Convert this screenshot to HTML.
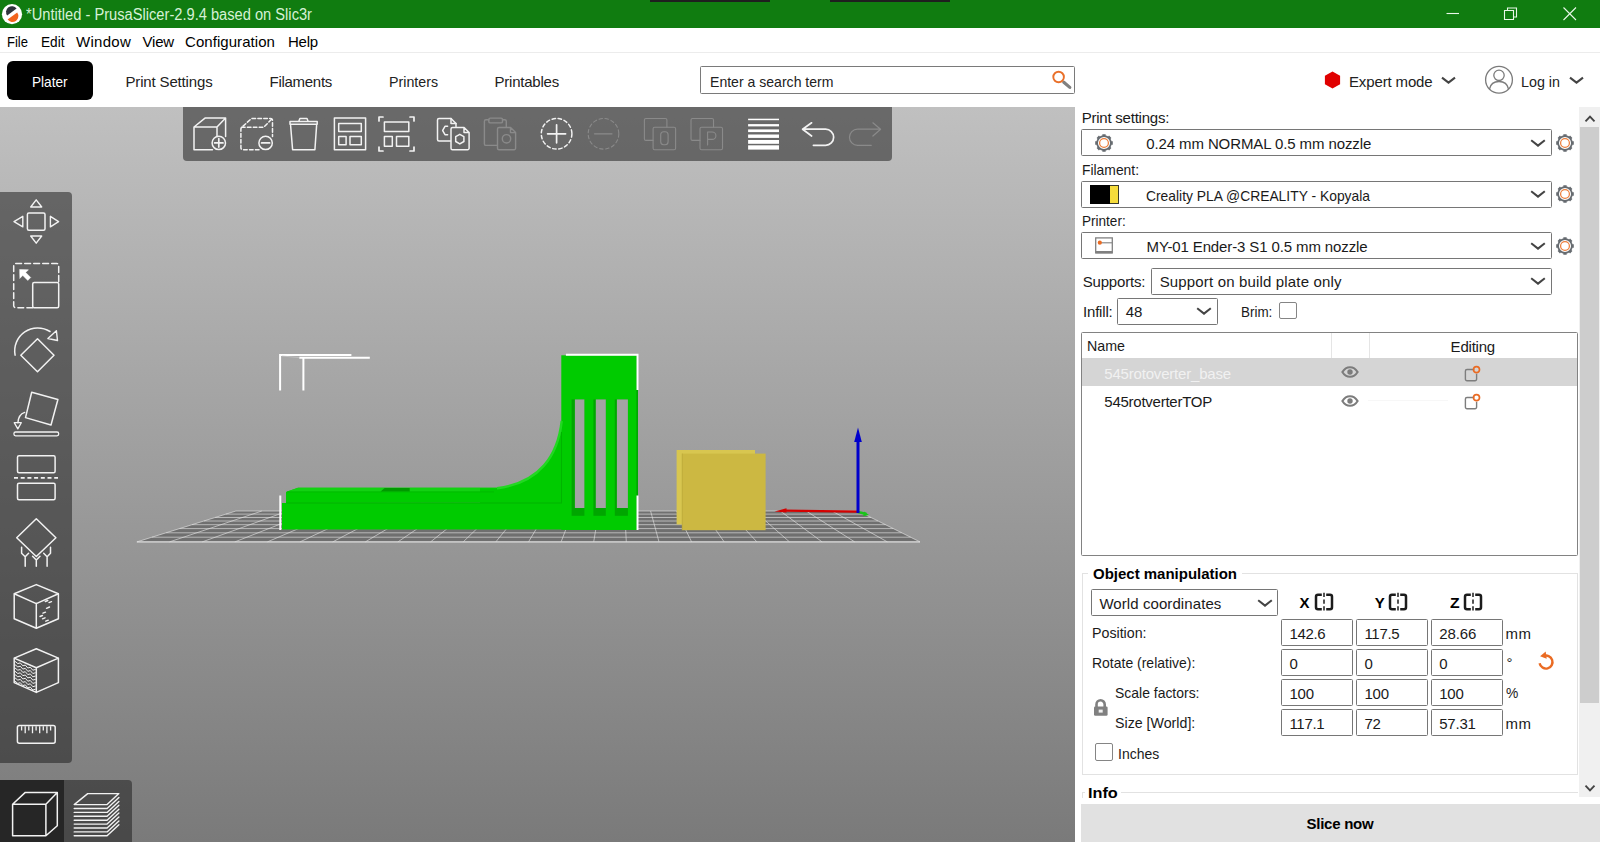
<!DOCTYPE html>
<html lang="en">
<head>
<meta charset="utf-8">
<title>*Untitled - PrusaSlicer-2.9.4 based on Slic3r</title>
<style>
html,body{margin:0;padding:0;}
body{width:1600px;height:842px;overflow:hidden;background:#fff;position:relative;
 font-family:"Liberation Sans",sans-serif;font-size:15px;color:#000;}
.t{position:absolute;white-space:pre;}
.a{position:absolute;}
.box{position:absolute;box-sizing:border-box;border:1px solid #767676;background:#fff;border-radius:1.5px;}
svg{position:absolute;overflow:visible;}
#titlebar{left:0;top:0;width:1600px;height:28px;background:#107c10;}
#canvas{left:0;top:107px;width:1075px;height:735px;background:linear-gradient(#c0c0c0,#7a7a7a);overflow:hidden;}
#toptb{left:182.500px;top:0;width:709.500px;height:53.800px;background:rgba(31,31,31,.54);border-radius:0 0 4px 4px;}
#lefttb{left:0;top:85.300px;width:72.300px;height:571px;background:rgba(31,31,31,.54);border-radius:0 4px 4px 0;}
#viewtb{left:0;top:672.800px;width:131.500px;height:63px;background:rgba(31,31,31,.54);border-radius:0 4px 0 0;}
#viewsel{left:0;top:672.800px;width:63.800px;height:63px;background:#262626;}
.ic{fill:none;stroke:#f2f2f2;stroke-width:1.5;stroke-linejoin:round;stroke-linecap:round;}
.icd{fill:none;stroke:#8a8a8a;stroke-width:1.4;stroke-linejoin:round;stroke-linecap:round;}
</style>
</head>
<body>
<!-- ===== title bar ===== -->
<div class="a" id="titlebar"></div>
<div class="a" style="left:650px;top:0;width:120px;height:2px;background:#1f1f1f"></div>
<div class="a" style="left:830px;top:0;width:120px;height:2px;background:#1f1f1f"></div>
<svg style="left:0;top:0" width="28" height="28" viewBox="0 0 28 28">
 <circle cx="12" cy="14.2" r="10.1" fill="#fff"/>
 <path d="M7.2 15.5 A5.6 5.6 0 0 1 16.6 8.6 Z" fill="#2f343d"/>
 <path d="M17.2 12.6 A5.6 5.6 0 0 1 7.6 19.6 Z" fill="#f2641d"/>
</svg>
<span class="t" style="left:25.5px;top:3.86px;font-size:16px;line-height:22px;transform:scaleX(0.9162);transform-origin:0 0;color:#d6f1d6;">*Untitled - PrusaSlicer-2.9.4 based on Slic3r</span>
<svg style="left:1440px;top:0" width="160" height="28" viewBox="1440 0 160 28" fill="none" stroke="#e9f7e9" stroke-width="1.1">
 <path d="M1446.5 13.5H1459"/>
 <path d="M1504.500 10.500h9v9h-9z M1507.500 10.500v-2.500h9v9h-3"/>
 <path d="M1563.5 7.5l12.5 12.5M1576 7.5l-12.5 12.5"/>
</svg>
<!-- ===== menu bar ===== -->
<div class="a" style="left:0;top:52px;width:1600px;height:1px;background:#ececec"></div>
<span class="t" style="left:6.5px;top:30.50px;font-size:15px;line-height:21px;transform:scaleX(0.8688);transform-origin:0 0;">File</span>
<span class="t" style="left:40.5px;top:30.50px;font-size:15px;line-height:21px;transform:scaleX(0.9088);transform-origin:0 0;">Edit</span>
<span class="t" style="left:76px;top:30.50px;font-size:15px;line-height:21px;letter-spacing:0.273px;">Window</span>
<span class="t" style="left:142.5px;top:30.50px;font-size:15px;line-height:21px;letter-spacing:-0.188px;">View</span>
<span class="t" style="left:185px;top:30.50px;font-size:15px;line-height:21px;letter-spacing:0.059px;">Configuration</span>
<span class="t" style="left:288px;top:30.50px;font-size:15px;line-height:21px;letter-spacing:-0.215px;">Help</span>
<!-- ===== tab bar ===== -->
<div class="a" style="left:7px;top:61px;width:86px;height:39px;background:#000;border-radius:6px"></div>
<span class="t" style="left:32.3px;top:71.00px;font-size:15px;line-height:21px;transform:scaleX(0.9085);transform-origin:0 0;color:#fff;">Plater</span>
<span class="t" style="left:125.5px;top:71.00px;font-size:15px;line-height:21px;letter-spacing:-0.158px;color:#222;">Print Settings</span>
<span class="t" style="left:269.5px;top:71.00px;font-size:15px;line-height:21px;letter-spacing:-0.281px;color:#222;">Filaments</span>
<span class="t" style="left:389px;top:71.00px;font-size:15px;line-height:21px;transform:scaleX(0.9480);transform-origin:0 0;color:#222;">Printers</span>
<span class="t" style="left:494.5px;top:71.00px;font-size:15px;line-height:21px;letter-spacing:-0.220px;color:#222;">Printables</span>
<div class="box" style="left:700px;top:66px;width:375px;height:28px;border-color:#7a7a7a"></div>
<span class="t" style="left:709.5px;top:71.10px;font-size:15px;line-height:21px;transform:scaleX(0.9376);transform-origin:0 0;color:#222;">Enter a search term</span>
<svg style="left:1048px;top:66px" width="28" height="28" viewBox="1048 66 28 28" fill="none">
 <path d="M1063.800 82.200l6 5.200" stroke="#808080" stroke-width="3.200" stroke-linecap="round"/>
 <circle cx="1058.6" cy="77" r="5.300" stroke="#e9702a" stroke-width="1.900"/>
</svg>
<svg style="left:1320px;top:66px" width="280" height="30" viewBox="1320 66 280 30" fill="none">
 <path d="M1332.5 71.5l7.6 4.3v8.5l-7.6 4.3l-7.6-4.3v-8.5z" fill="#e00000"/>
 <path d="M1442 77.7l6.5 5l6.5-5" stroke="#444" stroke-width="2.1"/>
 <path d="M1570 77.7l6.5 5l6.5-5" stroke="#444" stroke-width="2.1"/>
 <circle cx="1499" cy="79.8" r="13.4" stroke="#7b7b7b" stroke-width="1.3"/>
 <circle cx="1499" cy="75.3" r="5.2" stroke="#7b7b7b" stroke-width="1.3"/>
 <path d="M1489.5 89c1-5 4.5-7.5 9.5-7.5s8.500 2.500 9.500 7.500" stroke="#7b7b7b" stroke-width="1.3"/>
</svg>
<span class="t" style="left:1349px;top:70.50px;font-size:15px;line-height:21px;letter-spacing:-0.141px;color:#222;">Expert mode</span>
<span class="t" style="left:1521px;top:70.50px;font-size:15px;line-height:21px;transform:scaleX(0.9541);transform-origin:0 0;color:#222;">Log in</span>
<!-- ===== 3D canvas ===== -->
<div class="a" id="canvas">
<svg style="left:0;top:0" width="1075" height="735" viewBox="0 107 1075 735">
<polygon points="136.9,541.9 920.0,541.9 858.0,511.0 235.9,511.0" fill="#666" fill-opacity=".82"/>
<path d="M136.9 541.9L235.9 511.0M169.5 541.9L261.8 511.0M202.2 541.9L287.8 511.0M234.8 541.9L313.7 511.0M267.4 541.9L339.6 511.0M300.0 541.9L365.5 511.0M332.7 541.9L391.4 511.0M365.3 541.9L417.4 511.0M397.9 541.9L443.3 511.0M430.6 541.9L469.2 511.0M463.2 541.9L495.1 511.0M495.8 541.9L521.0 511.0M528.5 541.9L547.0 511.0M561.1 541.9L572.9 511.0M593.7 541.9L598.8 511.0M626.3 541.9L624.7 511.0M659.0 541.9L650.6 511.0M691.6 541.9L676.6 511.0M724.2 541.9L702.5 511.0M756.9 541.9L728.4 511.0M789.5 541.9L754.3 511.0M822.1 541.9L780.3 511.0M854.7 541.9L806.2 511.0M887.4 541.9L832.1 511.0M920.0 541.9L858.0 511.0M136.9 541.9L920.0 541.9M152.0 537.2L910.6 537.2M166.2 532.8L901.7 532.8M179.5 528.6L893.3 528.6M192.1 524.7L885.5 524.7M204.0 521.0L878.0 521.0M215.2 517.5L871.0 517.5M225.8 514.1L864.3 514.1M235.9 511.0L858.0 511.0" stroke="#e4e4e4" stroke-opacity=".7" stroke-width=".9" fill="none"/>
<path d="M136.9 541.9L920.0 541.9" stroke="#dcdcdc" stroke-width="1"/>
<path d="M858 512L866.5 514" stroke="#19c419" stroke-width="2.6"/><path d="M864 511.6l5 3.400l-5.800 1.200z" fill="#19c419"/>
<path d="M858 511.600L784 510.600" stroke="#d40000" stroke-width="2.200"/><path d="M774.500 511.400l12-3.200v4.400z" fill="#d40000"/>
<path d="M858 513V440" stroke="#0000cc" stroke-width="3"/><path d="M858 427.500l3.800 14.500h-7.600z" fill="#0000cc"/>
<rect x="676.600" y="450" width="78.400" height="74.500" fill="#d8c650"/>
<rect x="681.800" y="453.600" width="1.200" height="76.600" fill="#bba83a"/>
<rect x="682.600" y="453.600" width="83" height="76.600" fill="#ccb842"/>
<rect x="561.300" y="355.300" width="76.600" height="174.700" fill="#00cb00"/>
<rect x="282" y="503" width="355" height="26.500" fill="#00cb00"/>
<path d="M286 503v-10.400q0-1 1-1l11-3.800H500v15z" fill="#00cb00"/>
<path d="M287 491.700l11-3.900H497l-4 3.900z" fill="#12d212"/>
<path d="M561.700 421C558 455 540 483 497 488.200H480V503H562z" fill="#00cb00"/>
<path d="M561.700 421C558 455 540 483 497 488.200" fill="none" stroke="#22d822" stroke-width="2.400"/>
<path d="M287 491.900H494" stroke="#00b800" stroke-width=".8"/>
<path d="M286.300 503H561.500V432" fill="none" stroke="#00b400" stroke-width="1.100"/>
<path d="M380.600 491.500l4-3.400h25.100v3.400z" fill="#009a00"/>
<rect x="571.6" y="399.400" width="12.8" height="116.400" fill="#00a600"/>
<rect x="574.9" y="399.400" width="9.5" height="108.600" fill="#a3a3a3"/>
<rect x="593.4" y="399.400" width="12.4" height="116.400" fill="#00a600"/>
<rect x="595.8" y="399.400" width="10.0" height="108.600" fill="#a3a3a3"/>
<rect x="614.8" y="399.400" width="13.1" height="116.400" fill="#00a600"/>
<rect x="616.9" y="399.400" width="11.0" height="108.600" fill="#a3a3a3"/>
<rect x="636.300" y="355.300" width="1.700" height="174.700" fill="#00a800"/>
<path d="M280.100 390.400V354.900H351.400" stroke="#fff" fill="none" stroke-width="2"/>
<path d="M303.400 390.400V357.800M299.300 357.800H369.800" stroke="#fff" fill="none" stroke-width="2"/>
<path d="M282 356L299 357.600" stroke="#c8c8c8" stroke-width=".7" fill="none"/>
<path d="M565.900 354.800H637.500V390" stroke="#fff" fill="none" stroke-width="2"/>
<path d="M637.500 495.500V530" stroke="#fff" fill="none" stroke-width="2"/>
<path d="M280.300 495.500V530" stroke="#fff" fill="none" stroke-width="2"/>
</svg>
<div class="a" id="toptb"></div>
<div class="a" id="lefttb"></div>
<div class="a" id="viewtb"></div>
<div class="a" id="viewsel"></div>
<!-- top toolbar icons (page coordinates via viewBox) -->
<svg style="left:0;top:0" width="1075" height="735" viewBox="0 107 1075 735">
<g class="ic">
 <!-- add -->
 <path d="M217 136.500v-9.500h-23v22.700h18.500M194 127l11-8.900h20.600l-8.600 8.900M225.600 118.100v18.500"/>
 <circle cx="218.800" cy="142.900" r="6.700"/>
 <path d="M214.600 142.900h8.400M218.800 138.700v8.400" stroke-width="1.700"/>
 <!-- delete -->
 <g stroke-dasharray="3.600 2.300">
 <path d="M259 149.700h-16.100a2 2 0 0 1-2-2v-18.700a2 2 0 0 1 .700-1.500l9.400-8.600a2 2 0 0 1 1.300-.500h18.200a2 2 0 0 1 2 2v16"/>
 <path d="M241.500 127.200h22.300l8-8.200"/>
 </g>
 <circle cx="265.600" cy="142.900" r="6.700"/>
 <path d="M261.600 142.900h8" stroke-width="1.800"/>
 <!-- trash -->
 <path d="M290.600 125.400l2 24.300h22.300l1.700-24.300"/>
 <path d="M290 121.600h27.200v2.600h-27.200zM298.700 121.600l1.200-3.100h7.100l1.200 3.100" />
 <!-- arrange -->
 <path d="M334.400 118.100h31.200v31.600h-31.200zM338.700 123.500h22.600v8.100h-22.600zM338.700 136.400h7.400v8.400h-7.400zM350 136.400h11.300v8.400h-11.300z"/>
 <!-- arrange selection -->
 <path d="M379 121v-4h4M410 117h4v4M414 147v4h-4M383 151h-4v-4" stroke-width="1.700"/>
 <path d="M384.400 122h24.400v9.600h-24.400zM384.400 136.600h7.900v9.700h-7.900zM396.500 136.600h12.300v9.700h-12.300z"/>
 <!-- copy -->
 <path d="M450.500 141h-11.500a1.500 1.500 0 0 1-1.500-1.500v-19.500a1.500 1.500 0 0 1 1.500-1.500h12l5 5v3"/>
 <path d="M451 118.600v4.900h5"/>
 <path d="M447.600 126.300h-2.600l-2.300 4v.4l2.300 4h2.600"/>
 <path d="M452.500 127.500h11.600l5 5v15.700a1.500 1.500 0 0 1-1.500 1.500h-15.100a1.500 1.500 0 0 1-1.500-1.500v-19.200a1.500 1.500 0 0 1 1.500-1.500zM464 127.600v5h5"/>
 <path d="M459.800 134.300l4.100 2.400v4.800l-4.100 2.400l-4.100-2.400v-4.800z"/>
 <!-- select all (+) -->
 <circle cx="556.600" cy="133.800" r="15.300" stroke-dasharray="3.400 2.700"/>
 <path d="M547.600 133.800h18M556.600 124.800v18" stroke-width="1.700"/>
 <!-- layers -->
 <g stroke="none" fill="#fff">
  <rect x="748.100" y="118.700" width="30.900" height="1.500"/>
  <rect x="748.100" y="124.100" width="30.900" height="2.300"/>
  <rect x="748.100" y="129.400" width="30.900" height="2.700"/>
  <rect x="748.100" y="134.500" width="30.900" height="3.400"/>
  <rect x="748.100" y="140" width="30.900" height="3.800"/>
  <rect x="748.100" y="145.300" width="30.900" height="4.300"/>
 </g>
 <!-- undo -->
 <path d="M811.600 122.800l-9 6.400l9 6.800M802.800 129.200h22.800a8.050 8.050 0 0 1 0 16.100h-12.200" stroke-width="1.700"/>
</g>
<g class="icd">
 <!-- paste -->
 <path d="M497 145.400h-11.100a1.500 1.500 0 0 1-1.500-1.500v-22.600a1.500 1.500 0 0 1 1.500-1.500h3M502.500 119.800h2.300a1.500 1.500 0 0 1 1.500 1.500v5.700"/>
 <rect x="488.800" y="118.100" width="13.700" height="4.800" rx="1.500"/>
 <path d="M499 127.500h11.600l5 5v15.700a1.500 1.500 0 0 1-1.500 1.500h-15.100a1.500 1.500 0 0 1-1.500-1.500v-19.200a1.500 1.500 0 0 1 1.500-1.500zM510.500 127.600v5h5"/>
 <circle cx="506.500" cy="138.800" r="4.200"/>
 <!-- deselect (-) -->
 <circle cx="603.500" cy="133.800" r="15.300" stroke-dasharray="3.400 2.700" stroke-width="1.100"/>
 <path d="M594.500 133.800h17.500" stroke-width="1.200"/>
 <!-- copy O -->
 <g stroke-width="1.100">
 <path d="M653 140.400h-7.100a1.500 1.500 0 0 1-1.500-1.500v-18.900a1.500 1.500 0 0 1 1.500-1.500h19.500a1.500 1.500 0 0 1 1.500 1.500v7"/>
 <rect x="653.100" y="127.300" width="22.500" height="22.500" rx="1.500"/>
 <rect x="660.700" y="131.800" width="7.400" height="13" rx="3"/>
 <!-- copy P -->
 <path d="M700 140.400h-7.500a1.500 1.500 0 0 1-1.500-1.500v-18.900a1.500 1.500 0 0 1 1.500-1.500h19.500a1.500 1.500 0 0 1 1.500 1.500v7"/>
 <rect x="700" y="127.300" width="22.500" height="22.500" rx="1.500"/>
 <path d="M707.600 145v-13h4.600a3.700 3.700 0 0 1 0 7.400h-4.600"/>
 </g>
 <!-- redo -->
 <path d="M872.900 122.800l7.700 6.400l-7.700 6.800M880.300 129.200h-22.800a8.050 8.050 0 0 0 0 16.100h13.800" stroke-width="1.200"/>
</g>
</svg>
<!-- left toolbar + view toolbar icons -->
<svg style="left:0;top:0" width="1075" height="735" viewBox="0 107 1075 735">
<g class="ic" stroke-width="1.600">
<rect x="27.400" y="213" width="17.600" height="17.200" rx="1.500"/>
<path d="M36.200 199.800l5.500 7.200h-11zM36.200 243.200l5.500-7.200h-11zM14 221.600l8.800-5.300v10.600zM58.600 221.600l-8.200-5.300v10.600z" stroke-width="1.400"/>
<path d="M32.700 307.700h-17a2 2 0 0 1-2-2v-40.300a2 2 0 0 1 2-2h41a2 2 0 0 1 2 2v17" stroke-dasharray="5.800 3.200"/>
<rect x="32.700" y="282.400" width="26" height="25.300" rx="1.500"/>
<path d="M19.800 269.600l8.600.2l-2.700 2.700l5 5l-2.900 2.900l-5-5l-2.800 2.800z" fill="#fff" stroke-width=".6"/>
<path d="M37.500 338.800l16.500 16.400l-16.500 16.500l-16.700-16.500z"/>
<path d="M15.100 355.200A23 23 0 0 1 50 331.500"/>
<path d="M56.400 330.800l-8.500 7.700l9.600 2z" stroke-width="1.400"/>
<path d="M31.700 392.300l26.200 7.200l-6.900 25.500l-25.500-7.400z"/>
<rect x="13.900" y="432" width="44.800" height="3.800" rx="1.700" stroke-width="1.300"/>
<path d="M24.700 412.400c-4.500 1.500-6.500 5-6.800 10.300" stroke-width="1.400"/><path d="M14.200 422.700h7.100l-3.500 6.200z" stroke-width="1.300"/>
<rect x="17.500" y="455.800" width="37.600" height="17" rx="1.500"/><rect x="17.500" y="483.300" width="37.600" height="16.500" rx="1.500"/>
<path d="M14 477.900h44" stroke-dasharray="4 2.700" stroke-width="1.900" stroke-linecap="butt"/>
<path d="M36.300 518.800l19.600 18.900l-19.600 18.800l-19.600-18.800z"/>
<path d="M25.200 566.200v-9.500l-3.600-3.500v-6M25.200 556.700l3.400-3.500M36.300 566.200v-6.200l-3.700-3.800M36.300 560l3.700-3.800M47.100 566.200v-9.500l3.400-3.500v-6M47.100 556.700l-3.400-3.500" stroke-width="1.500"/>
<path d="M36.300 584.600l22.100 9.200v24.900l-22.100 9.600l-22.100-9.600v-24.900zM14.200 593.800l22.100 9.800l22.100-9.800M36.300 603.600v24.700"/>
<path d="M45.300 601.500l2.500-1M49 602.600l2.500-1M46.500 608.300l3-1.300M43 613.200l2.500-1M40 616.500l2.500-1M42.500 618.800l2.500-1M45.800 621.200l2.500-1" stroke-width="1.400"/>
<path d="M36.300 648.800l22.100 9.300v24.500l-22.100 9.800l-22.100-9.800v-24.500zM14.200 658.100l22.100 9.600l22.100-9.600M36.300 667.700v24.700"/>
<path d="M15.300 661.6L17.8 663.6L20.3 662.9L22.8 665.8L25.3 665.1L27.8 668.0L30.3 667.3L32.8 670.2L35.3 669.5M15.300 664.9L17.8 666.9L20.3 666.2L22.8 669.1L25.3 668.4L27.8 671.3L30.3 670.6L32.8 673.5L35.3 672.8M15.300 668.2L17.8 670.2L20.3 669.5L22.8 672.4L25.3 671.7L27.8 674.6L30.3 673.9L32.8 676.8L35.3 676.1M15.300 671.5L17.8 673.5L20.3 672.8L22.8 675.7L25.3 675.0L27.8 677.9L30.3 677.2L32.8 680.1L35.3 679.4M15.300 674.8L17.8 676.8L20.3 676.1L22.8 679.0L25.3 678.3L27.8 681.2L30.3 680.5L32.8 683.4L35.3 682.7M15.300 678.1L17.8 680.1L20.3 679.4L22.8 682.3L25.3 681.6L27.8 684.5L30.3 683.8L32.8 686.7L35.3 686.0M15.300 681.4L17.8 683.4L20.3 682.7L22.8 685.6L25.3 684.9L27.8 687.8L30.3 687.1L32.8 690.0L35.3 689.3" stroke-width="1" stroke-linejoin="round"/>
<rect x="17.400" y="725.600" width="37.800" height="17.700" rx="2"/>
<path d="M21.6 726.300v4.3M25.2 726.300v7M28.8 726.300v4.3M32.5 726.300v7M36.1 726.300v4.3M39.7 726.300v7M43.3 726.300v4.3M46.9 726.300v7M50.6 726.300v4.3" stroke-width="1.300" stroke-linecap="butt"/>
<path d="M12.600 804.200h33.300v31.600h-33.300zM12.600 804.200l12.700-11.800h32l-11.400 11.800M57.300 792.400v33.300l-11.400 10.100"/>
<path d="M74.200 804.600l13.500-11h31.200l-11.800 11zM74.200 808.5h32.900l11.800-11M74.200 812.4h32.900l11.800-11M74.200 816.3h32.900l11.800-11M74.200 820.2h32.900l11.800-11M74.200 824.1h32.900l11.800-11M74.200 828.0h32.900l11.800-11M74.200 831.9h32.900l11.800-11M74.200 835.8h32.900l11.800-11" stroke-width="1.400"/>
</g></svg>
</div>
<!-- ===== right panel ===== -->
<svg width="0" height="0" style="left:0;top:0">
 <defs>
  <g id="gear">
   <path d="M7.00 0.00L8.80 0.00M4.95 4.95L6.22 6.22M0.00 7.00L0.00 8.80M-4.95 4.95L-6.22 6.22M-7.00 0.00L-8.80 0.00M-4.95 -4.95L-6.22 -6.22M-0.00 -7.00L-0.00 -8.80M4.95 -4.95L6.22 -6.22" stroke="#666b70" stroke-width="3.3" stroke-linecap="butt" fill="none"/>
   <circle r="6.9" fill="#fff" stroke="#666b70" stroke-width="1.7"/>
   <circle r="4.4" fill="none" stroke="#ec7d3a" stroke-width="1.25"/>
  </g>
  <path id="chev" d="M-6.800-2.800l6.800 5.400l6.800-5.400" fill="none" stroke="#444" stroke-width="2"/>
  <g id="eye" fill="none" stroke="#7c7c7c" stroke-width="2.1">
   <path d="M-7.600 0c2-3.300 4.600-4.800 7.600-4.800s5.600 1.500 7.600 4.800c-2 3.300-4.600 4.800-7.600 4.800s-5.600-1.500-7.600-4.800z"/>
   <circle r="2.700" fill="#7c7c7c" stroke="none"/>
  </g>
  <g id="edit" fill="none">
   <path d="M3.300-5.500h-7.300a1.600 1.600 0 0 0-1.600 1.600v8a1.600 1.600 0 0 0 1.600 1.600h8a1.600 1.600 0 0 0 1.600-1.600v-5.300" stroke="#7d7d7d" stroke-width="1.400"/>
   <circle cx="5.500" cy="-5.300" r="3" stroke="#ea6b23" stroke-width="1.700" fill="none"/>
  </g>
  <g id="axic" fill="none" stroke="#1c1c1c" stroke-width="2.500" stroke-linecap="butt">
   <path d="M-2.200-7.300h-3.800a2 2 0 0 0-2 2v10.600a2 2 0 0 0 2 2h3.800M2.200-7.300h3.800a2 2 0 0 1 2 2v10.600a2 2 0 0 1-2 2h-3.800"/>
   <path d="M0-9.300v18.600" stroke-width="1.500" stroke-dasharray="4.200 2.600"/>
  </g>
 </defs>
</svg>
<span class="t" style="left:1081.7px;top:106.60px;font-size:15px;line-height:21px;letter-spacing:-0.225px;color:#1a1a1a;">Print settings:</span>
<div class="box" style="left:1081px;top:129px;width:471px;height:27px"></div>
<svg style="left:1104px;top:142.500px" width="1" height="1"><use href="#gear"/></svg>
<span class="t" style="left:1146.2px;top:132.90px;font-size:15px;line-height:21px;letter-spacing:-0.102px;color:#1a1a1a;">0.24 mm NORMAL 0.5 mm nozzle</span>
<svg style="left:1538px;top:142.800px" width="1" height="1"><use href="#chev"/></svg>
<svg style="left:1565px;top:142.500px" width="1" height="1"><use href="#gear"/></svg>

<span class="t" style="left:1081.7px;top:158.80px;font-size:15px;line-height:21px;transform:scaleX(0.9240);transform-origin:0 0;color:#1a1a1a;">Filament:</span>
<div class="box" style="left:1081px;top:181px;width:471px;height:27px"></div>
<div class="a" style="left:1089.500px;top:184.500px;width:29.500px;height:19.500px;background:#f6dc3c;box-sizing:border-box;border:1px solid #3a3a2a"></div>
<div class="a" style="left:1089.500px;top:184.500px;width:20px;height:19.500px;background:#000"></div>
<span class="t" style="left:1146.2px;top:184.60px;font-size:15px;line-height:21px;transform:scaleX(0.9235);transform-origin:0 0;color:#1a1a1a;">Creality PLA @CREALITY - Kopyala</span>
<svg style="left:1538px;top:194.300px" width="1" height="1"><use href="#chev"/></svg>
<svg style="left:1565px;top:194px" width="1" height="1"><use href="#gear"/></svg>

<span class="t" style="left:1081.7px;top:210.30px;font-size:15px;line-height:21px;transform:scaleX(0.9037);transform-origin:0 0;color:#1a1a1a;">Printer:</span>
<div class="box" style="left:1081px;top:232px;width:471px;height:27px"></div>
<svg style="left:1095px;top:237px" width="20" height="18" viewBox="0 0 20 18">
 <rect x=".7" y=".9" width="16.600" height="15" fill="#fff" stroke="#808080" stroke-width="1.300"/>
 <rect x=".7" y="14" width="16.600" height="2.300" fill="#808080"/>
 <path d="M5 5.800h12" stroke="#808080" stroke-width="1.100"/>
 <circle cx="4.800" cy="5.700" r="2.100" fill="#ea6b23"/>
</svg>
<span class="t" style="left:1146.5px;top:236.00px;font-size:15px;line-height:21px;letter-spacing:-0.119px;color:#1a1a1a;">MY-01 Ender-3 S1 0.5 mm nozzle</span>
<svg style="left:1538px;top:245.800px" width="1" height="1"><use href="#chev"/></svg>
<svg style="left:1565px;top:245.500px" width="1" height="1"><use href="#gear"/></svg>

<span class="t" style="left:1082.7px;top:270.50px;font-size:15px;line-height:21px;letter-spacing:-0.169px;color:#1a1a1a;">Supports:</span>
<div class="box" style="left:1151px;top:268px;width:401px;height:27px"></div>
<span class="t" style="left:1159.7px;top:270.50px;font-size:15px;line-height:21px;letter-spacing:0.161px;color:#1a1a1a;">Support on build plate only</span>
<svg style="left:1538px;top:280.600px" width="1" height="1"><use href="#chev"/></svg>
<span class="t" style="left:1083px;top:300.90px;font-size:15px;line-height:21px;letter-spacing:-0.192px;color:#1a1a1a;">Infill:</span>
<div class="box" style="left:1117px;top:298px;width:101px;height:27px"></div>
<span class="t" style="left:1125.8px;top:300.90px;font-size:15px;line-height:21px;letter-spacing:-0.094px;color:#1a1a1a;">48</span>
<svg style="left:1203.700px;top:311.300px" width="1" height="1"><use href="#chev"/></svg>
<span class="t" style="left:1241px;top:300.90px;font-size:15px;line-height:21px;transform:scaleX(0.8943);transform-origin:0 0;color:#1a1a1a;">Brim:</span>
<div class="box" style="left:1278.500px;top:302.300px;width:18px;height:17.200px;border:1.500px solid #858585;border-radius:2px"></div>

<!-- object list -->
<div class="box" style="left:1081px;top:331.500px;width:497px;height:224px;border-color:#828282"></div>
<div class="a" style="left:1331px;top:333px;width:1px;height:25px;background:#e5e5e5"></div>
<div class="a" style="left:1368.500px;top:333px;width:1px;height:25px;background:#e5e5e5"></div>
<span class="t" style="left:1087.4px;top:335.30px;font-size:15px;line-height:21px;transform:scaleX(0.9496);transform-origin:0 0;color:#1a1a1a;">Name</span>
<span class="t" style="left:1450.6px;top:335.70px;font-size:15px;line-height:21px;letter-spacing:-0.211px;color:#1a1a1a;">Editing</span>
<div class="a" style="left:1082px;top:358.300px;width:495px;height:27.300px;background:#d5d5d5"></div>
<span class="t" style="left:1104.3px;top:362.60px;font-size:15px;line-height:21px;letter-spacing:-0.189px;color:#f1f1f1;">545rotoverter_base</span>
<span class="t" style="left:1104.3px;top:390.80px;font-size:15px;line-height:21px;letter-spacing:-0.250px;color:#1a1a1a;">545rotverterTOP</span>
<svg style="left:1350px;top:372.300px" width="1" height="1"><use href="#eye"/></svg>
<svg style="left:1350px;top:400.600px" width="1" height="1"><use href="#eye"/></svg>
<svg style="left:1470.800px;top:374.600px" width="1" height="1"><use href="#edit"/></svg>
<svg style="left:1470.800px;top:402.900px" width="1" height="1"><use href="#edit"/></svg>
<div class="a" style="left:1368px;top:399.500px;width:80px;height:1px;background:#f7f7f7"></div>

<!-- scrollbar -->
<div class="a" style="left:1579px;top:107px;width:21px;height:690px;background:#f0f0f0"></div>
<div class="a" style="left:1580px;top:127px;width:19px;height:576px;background:#cdcdcd"></div>
<svg style="left:1589.500px;top:119px" width="1" height="1"><path d="M-4.500 2.300l4.500-4.600l4.500 4.600" fill="none" stroke="#444" stroke-width="1.900"/></svg>
<svg style="left:1589.500px;top:787.500px" width="1" height="1"><path d="M-4.500-2.300l4.500 4.600l4.500-4.600" fill="none" stroke="#444" stroke-width="1.900"/></svg>
<!-- ===== object manipulation ===== -->
<div class="a" style="left:1081.500px;top:572.500px;width:496px;height:202.500px;box-sizing:border-box;border:1px solid #e2e2e2"></div>
<div class="a" style="left:1088px;top:566px;width:154px;height:14px;background:#fff"></div>
<span class="t" style="left:1093px;top:562.50px;font-size:15px;line-height:21px;letter-spacing:-0.010px;font-weight:700;">Object manipulation</span>
<div class="box" style="left:1091px;top:589px;width:187px;height:27px"></div>
<span class="t" style="left:1099.4px;top:592.60px;font-size:15px;line-height:21px;letter-spacing:0.081px;color:#1a1a1a;">World coordinates</span>
<svg style="left:1264.500px;top:602.500px" width="1" height="1"><use href="#chev"/></svg>
<span class="t" style="left:1299.5px;top:591.90px;font-size:15px;line-height:21px;letter-spacing:-0.016px;font-weight:700;">X</span>
<span class="t" style="left:1374.8px;top:591.90px;font-size:15px;line-height:21px;letter-spacing:-0.416px;font-weight:700;">Y</span>
<span class="t" style="left:1449.5px;top:591.90px;font-size:15px;line-height:21px;transform:scaleX(1.0467);transform-origin:0 0;font-weight:700;">Z</span>
<svg style="left:1324.200px;top:602.200px" width="1" height="1"><use href="#axic"/></svg>
<svg style="left:1398.400px;top:602.200px" width="1" height="1"><use href="#axic"/></svg>
<svg style="left:1473px;top:602.200px" width="1" height="1"><use href="#axic"/></svg>

<span class="t" style="left:1091.5px;top:622.10px;font-size:15px;line-height:21px;transform:scaleX(0.9471);transform-origin:0 0;color:#1a1a1a;">Position:</span>
<span class="t" style="left:1091.5px;top:652.30px;font-size:15px;line-height:21px;transform:scaleX(0.9317);transform-origin:0 0;color:#1a1a1a;">Rotate (relative):</span>
<span class="t" style="left:1114.5px;top:682.10px;font-size:15px;line-height:21px;transform:scaleX(0.9298);transform-origin:0 0;color:#1a1a1a;">Scale factors:</span>
<span class="t" style="left:1114.5px;top:712.00px;font-size:15px;line-height:21px;transform:scaleX(0.9475);transform-origin:0 0;color:#1a1a1a;">Size [World]:</span>

<div class="box" style="left:1281px;top:619px;width:72px;height:27px"></div>
<div class="box" style="left:1356px;top:619px;width:72px;height:27px"></div>
<div class="box" style="left:1431px;top:619px;width:72px;height:27px"></div>
<div class="box" style="left:1281px;top:649px;width:72px;height:27px"></div>
<div class="box" style="left:1356px;top:649px;width:72px;height:27px"></div>
<div class="box" style="left:1431px;top:649px;width:72px;height:27px"></div>
<div class="box" style="left:1281px;top:679px;width:72px;height:27px"></div>
<div class="box" style="left:1356px;top:679px;width:72px;height:27px"></div>
<div class="box" style="left:1431px;top:679px;width:72px;height:27px"></div>
<div class="box" style="left:1281px;top:709px;width:72px;height:27px"></div>
<div class="box" style="left:1356px;top:709px;width:72px;height:27px"></div>
<div class="box" style="left:1431px;top:709px;width:72px;height:27px"></div>

<span class="t" style="left:1289.4px;top:623.00px;font-size:15px;line-height:21px;letter-spacing:-0.309px;color:#1a1a1a;">142.6</span>
<span class="t" style="left:1364.4px;top:623.00px;font-size:15px;line-height:21px;letter-spacing:-0.287px;color:#1a1a1a;">117.5</span>
<span class="t" style="left:1439.2px;top:623.00px;font-size:15px;line-height:21px;letter-spacing:-0.109px;color:#1a1a1a;">28.66</span>
<span class="t" style="left:1289.4px;top:653.00px;font-size:15px;line-height:21px;color:#1a1a1a;">0</span>
<span class="t" style="left:1364.4px;top:653.00px;font-size:15px;line-height:21px;color:#1a1a1a;">0</span>
<span class="t" style="left:1439.2px;top:653.00px;font-size:15px;line-height:21px;color:#1a1a1a;">0</span>
<span class="t" style="left:1289.4px;top:683.00px;font-size:15px;line-height:21px;letter-spacing:-0.177px;color:#1a1a1a;">100</span>
<span class="t" style="left:1364.4px;top:683.00px;font-size:15px;line-height:21px;letter-spacing:-0.177px;color:#1a1a1a;">100</span>
<span class="t" style="left:1439.2px;top:683.00px;font-size:15px;line-height:21px;letter-spacing:-0.177px;color:#1a1a1a;">100</span>
<span class="t" style="left:1289.4px;top:713.00px;font-size:15px;line-height:21px;letter-spacing:-0.287px;color:#1a1a1a;">117.1</span>
<span class="t" style="left:1364.4px;top:713.00px;font-size:15px;line-height:21px;letter-spacing:-0.344px;color:#1a1a1a;">72</span>
<span class="t" style="left:1439.2px;top:713.00px;font-size:15px;line-height:21px;letter-spacing:-0.209px;color:#1a1a1a;">57.31</span>
<span class="t" style="left:1505.6px;top:622.50px;font-size:15px;line-height:21px;letter-spacing:0.500px;color:#1a1a1a;">mm</span>
<span class="t" style="left:1506.4px;top:652.30px;font-size:15px;line-height:21px;color:#1a1a1a;">°</span>
<span class="t" style="left:1506px;top:682.30px;font-size:15px;line-height:21px;transform:scaleX(0.9218);transform-origin:0 0;color:#1a1a1a;">%</span>
<span class="t" style="left:1505.6px;top:712.50px;font-size:15px;line-height:21px;letter-spacing:0.500px;color:#1a1a1a;">mm</span>

<svg style="left:1546px;top:662px" width="1" height="1" fill="none">
 <path d="M-2.600-5.900A6.500 6.500 0 1 1-6.400 1.300" stroke="#ea6b23" stroke-width="2.400"/>
 <path d="M-0.300-10.400l-5.600 4.600l6.600 2.600z" fill="#ea6b23"/>
</svg>
<svg style="left:1093px;top:699px" width="16" height="18" viewBox="0 0 16 18">
 <path d="M3.500 8.500v-3.100a4.100 4.100 0 0 1 8.200 0v3.100" fill="none" stroke="#808080" stroke-width="2.600"/>
 <rect x="1" y="7.500" width="13.600" height="9.300" rx="1.300" fill="#808080"/>
 <rect x="5.700" y="10.600" width="4" height="3" fill="#f0f0f0"/>
</svg>
<div class="box" style="left:1095.200px;top:743.300px;width:18px;height:17.300px;border:1.500px solid #858585;border-radius:2px"></div>
<span class="t" style="left:1117.7px;top:742.50px;font-size:15px;line-height:21px;transform:scaleX(0.9321);transform-origin:0 0;color:#1a1a1a;">Inches</span>

<!-- Info + slice -->
<div class="a" style="left:1081.500px;top:791.500px;width:496px;height:1px;background:#e2e2e2"></div>
<div class="a" style="left:1081.500px;top:791.500px;width:1px;height:6px;background:#e2e2e2"></div>
<div class="a" style="left:1085px;top:786px;width:36px;height:12px;background:#fff"></div>
<div class="a" style="left:1081px;top:780px;width:60px;height:17.500px;overflow:hidden"><span class="t" style="left:6.9px;top:1.90px;font-size:15px;line-height:21px;transform:scaleX(1.0836);transform-origin:0 0;font-weight:700;">Info</span></div>
<div class="a" style="left:1081px;top:804px;width:519px;height:38px;background:#e1e1e1"></div>
<span class="t" style="left:1306.6px;top:813.10px;font-size:15px;line-height:21px;letter-spacing:-0.276px;font-weight:700;">Slice now</span>
</body>
</html>
